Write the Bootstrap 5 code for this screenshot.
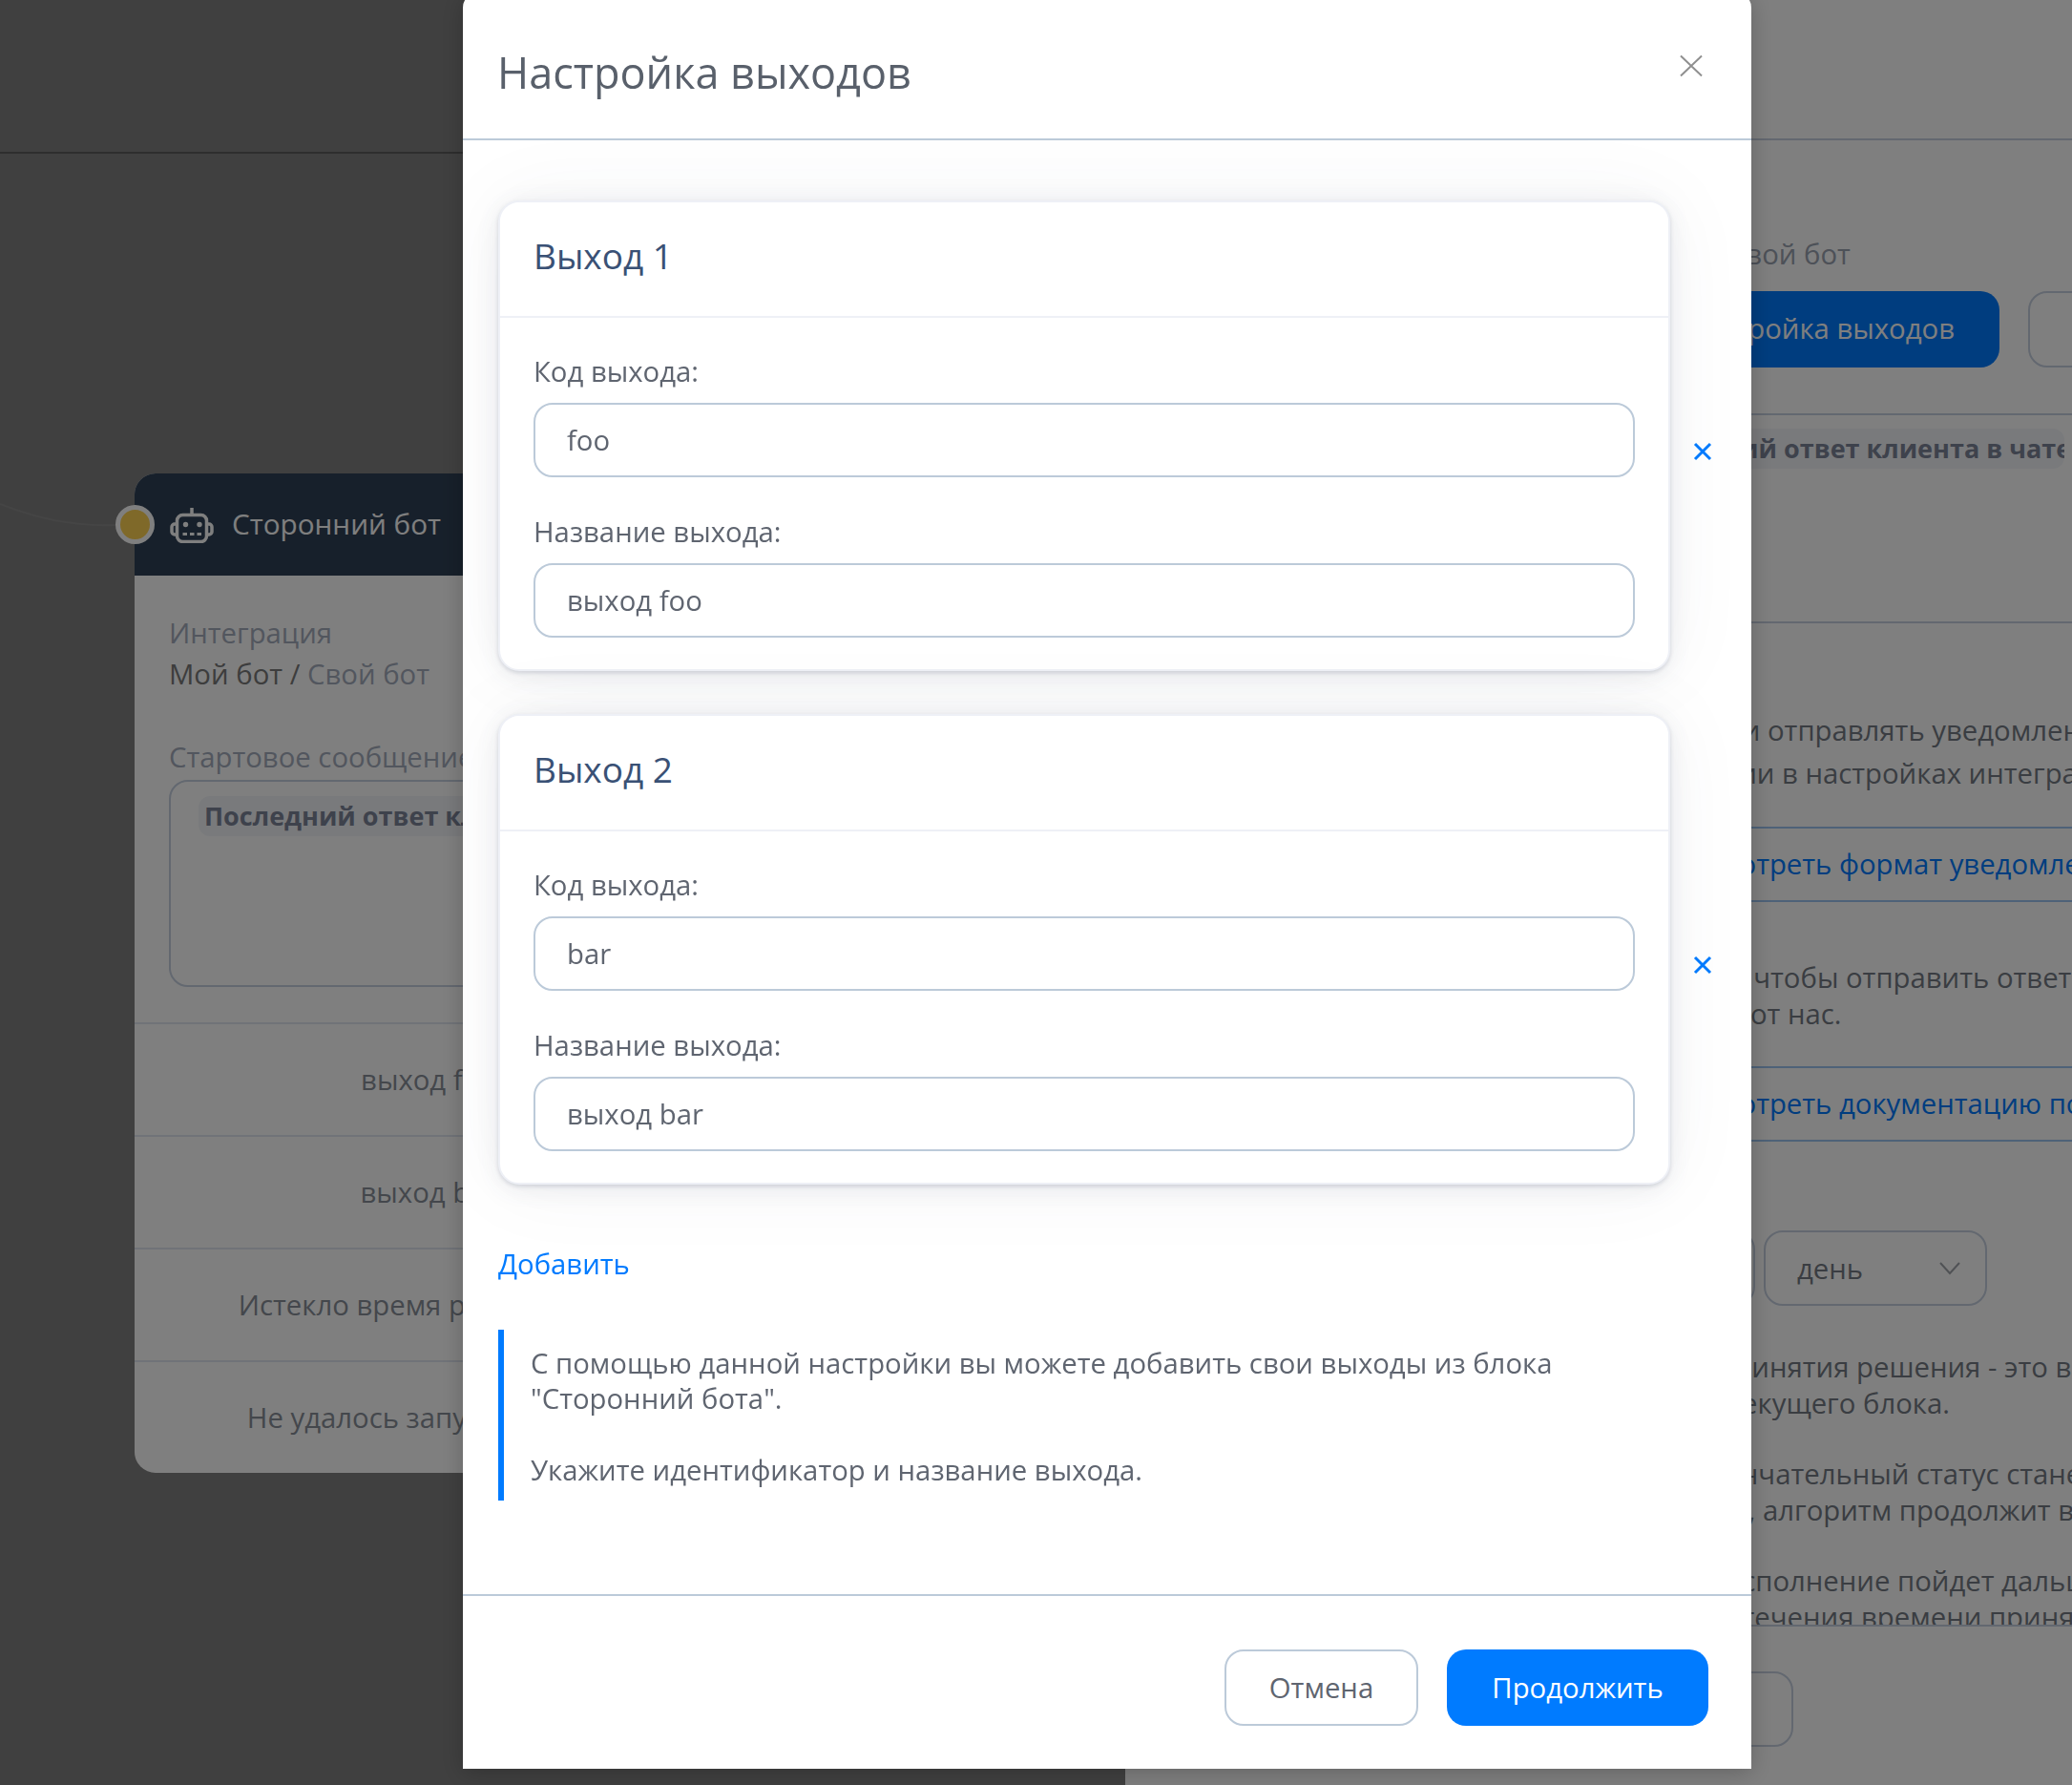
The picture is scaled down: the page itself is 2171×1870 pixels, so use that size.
<!DOCTYPE html>
<html lang="ru">
<head>
<meta charset="utf-8">
<title>Настройка выходов</title>
<link href="https://cdn.jsdelivr.net/npm/bootstrap@5.3.0/dist/css/bootstrap.min.css" rel="stylesheet">
<style>
html,body{height:100%;overflow:hidden}
body{font-family:"Open Sans","Noto Sans",sans-serif;font-size:29.3px;background:#fff;color:#747b84}
.stage{height:1870px;width:2171px}
.canvas-side{flex:0 0 1179px;background:#808080;position:relative;overflow:hidden}
.canvas-top{height:161px;border-bottom:2px solid #5c5c5c}
.wire{position:absolute;left:0;top:500px}
.flow-node{position:absolute;left:141px;top:496px;width:616px;height:1047px;background:#fff;border-radius:22px}
.node-head{height:107px;background:#2f4156;border-radius:22px 22px 0 0;color:#fff;padding-left:37px;gap:19px;font-size:29.700px}
.node-dot{position:absolute;left:-20px;top:33px;width:41px;height:41px;border-radius:50%;background:#ffd253;border:5px solid #fff}
.node-body{padding:39px 36px 0}
.node-line{line-height:43px;color:#a5adbd;white-space:nowrap}
.node-line b{font-weight:400;color:#7a7a7a}
.node-cap{line-height:40px;margin-top:45px;color:#a5adbd;white-space:nowrap}
.node-box{height:217px;margin-top:4px;border:2px solid #c6d0e0;border-radius:20px;padding:14px 29px;white-space:nowrap;overflow:hidden}
.var-chip{display:inline-block;background:#f3f5f9;border-radius:12px;font-weight:700;color:#7c8498;font-size:27px;line-height:42px;padding:0 6px}
.node-rows{margin-top:37px}
.node-row{height:118px;border-top:2px solid #e0e6f0;color:#888f99;text-align:center;line-height:116px;white-space:nowrap}
.panel-side{flex:1 1 auto;background:#fff;overflow:hidden;position:relative}
.panel-top{height:147px;border-bottom:2px solid #c6d0e0}
.panel-in{margin-left:321px;width:1000px;white-space:nowrap}
.pre{display:inline-block;text-align:right;white-space:pre}
.at-1847{width:347px}.at-1852{width:352px}.at-1867{width:367px}.at-1869{width:369px}.at-1873{width:373px}.at-1890{width:390px}.at-1927{width:427px}.at-1934{width:434px}.at-1945{width:445px}.at-1950{width:450px}.at-1952{width:452px}.at-1988{width:488px}.at-2008{width:508px}
.pl-bot{line-height:40px;margin-top:99px;color:#9aa2b0}
.panel-btns{margin-top:19px;gap:30px}
.panel-btn-main.btn,.panel-btn-alt.btn{height:80px;border-radius:20px;font-size:29.3px}
.panel-btn-main.btn{width:595px;background:#007bff;border:0;color:#fff;text-align:right;padding:0 47px 0 0}
.panel-btn-alt.btn{width:200px;border:2px solid #c6d0e0}
.panel-rule{border-top:2px solid #c6d0e0;margin-top:48px;margin-bottom:14px}
.panel-chip{height:42px;width:663px;background:#f3f5f9;border-radius:12px;font-weight:700;color:#7c8498;font-size:27px;line-height:42px;overflow:hidden}
.panel-rule2{border-top:2px solid #c6d0e0;margin-top:160px;margin-bottom:90px}
.para-wide{line-height:45px}
.para-tight{line-height:38px}
.doc-link{height:79px;border-top:2px solid #9cc4f0;border-bottom:2px solid #9cc4f0;line-height:75px;color:#007bff}
.mt-33{margin-top:33px}.mt-36{margin-top:36px}.mt-60{margin-top:60px}.mt-93{margin-top:93px}
.sel-row{gap:9px;height:79px}
.sel-a{width:339px;border:2px solid #c6d0e0;border-radius:20px}
.sel-b{width:234px;border:2px solid #c6d0e0;border-radius:20px;padding:0 26px 0 33px;color:#747b84}
.sel-val{padding-top:3px}
.scroll-note{height:291px;margin-top:45px;overflow:hidden;border-bottom:2px solid #c6d0e0;line-height:38px}
.scroll-note p{margin:0 0 36px}
.tail-btn{width:379px;height:79px;margin-top:47px;border:2px solid #c6d0e0;border-radius:20px}

.exit-dialog.modal-dialog{margin:-8px 0 0 485px;width:1350px;max-width:1350px;transform:none}
.modal.exit-modal{overflow:hidden;display:block}
.exit-dialog .modal-content{height:1861px;border:0;border-radius:16px 16px 0 0;box-shadow:0 4px 24px rgba(0,0,0,.22);color:#5f6570;display:flex;flex-direction:column}
.exit-dialog .modal-header{height:155px;flex:0 0 155px;padding:14px 51px 0 36px;border-bottom:2px solid #bccad9;border-radius:16px 16px 0 0;align-items:center}
.exit-dialog .modal-title{font-size:45px;font-weight:400;color:#59606b;line-height:60px}
.x-close{background:none;border:0;padding:0;line-height:0;margin-top:-13px}
.exit-dialog .modal-body{padding:63px 0 0 37px;flex:1 1 auto;overflow:hidden}
.out-row{width:1290px;gap:24px;margin-bottom:45px}
.out-card.card{width:1228px;flex:0 0 1228px;height:493px;border:2px solid #eef0f6;border-radius:22px;box-shadow:0 2px 4px rgba(60,70,100,.18),0 4px 30px rgba(60,70,100,.10),0 0 90px rgba(60,70,100,.05)}
.out-card .card-header{height:121px;flex:0 0 121px;background:#fff;border-bottom:2px solid #eef0f6;padding:0 35px 7px;border-radius:22px 22px 0 0;display:flex;align-items:center;font-size:37px;font-weight:500;color:#3a5175}
.out-card .card-body{padding:37px 35px 0}
.out-label{display:block;line-height:38px;margin-bottom:14px;color:#5f6570}
.out-card .form-control{height:78px;border:2px solid #bccad9;border-radius:20px;padding:0 33px;font-size:29.3px;color:#5f6570;margin-bottom:37.500px;box-shadow:none}
.out-card .form-control:last-child{margin-bottom:0}
.x-remove{background:none;border:0;padding:0;line-height:0;margin-top:32px}
.add-link{display:block;line-height:38px;color:#007bff;text-decoration:none;width:max-content;margin-top:64px}
.hint-note{margin-top:50px;width:1228px;height:179px;border-left:6px solid #007bff;padding:17px 0 0 28px;line-height:37.300px;color:#5f6570}
.exit-dialog .modal-footer{height:183px;border-top:2px solid #bccad9;border-radius:0;padding:0 45px 0 0;align-items:flex-start;justify-content:flex-end;gap:30px;flex:0 0 183px}
.exit-dialog .modal-footer>*{margin:56px 0 0}
.foot-btn.btn{height:80px;border-radius:20px;font-size:29.3px;padding:2px 0 0;line-height:1}
.foot-cancel.btn{width:203px;border:2px solid #bccad9;color:#5f6570;background:#fff}
.foot-go.btn{width:274px;border:0;background:#007bff;color:#fff}
</style>
</head>
<body>
<div class="stage d-flex">
  <div class="canvas-side">
    <div class="canvas-top"></div>
    <svg class="wire" width="130" height="70" viewBox="0 0 130 70" fill="none"><path d="M0 28C40 44 80 52 122 50" stroke="#8a8a8a" stroke-width="2"/></svg>
    <div class="flow-node">
      <div class="node-head d-flex align-items-center">
        <svg width="46" height="38" viewBox="0 0 46 38" fill="none" stroke="#fff" stroke-width="3.500" aria-hidden="true">
          <rect x="7.500" y="8.500" width="31" height="28" rx="6"/>
          <path d="M23 1v7M7 18H5a3 3 0 0 0-3 3v5a3 3 0 0 0 3 3h2M39 18h2a3 3 0 0 1 3 3v5a3 3 0 0 1-3 3h-2"/>
          <circle cx="16.500" cy="18.500" r="2.700" fill="#fff" stroke="none"/><circle cx="31" cy="18.500" r="2.700" fill="#fff" stroke="none"/>
          <path d="M13.500 28.500h4.500M21 28.500h4.500M28.500 28.500h4.500" stroke-width="3"/>
        </svg>
        <span>Сторонний бот</span>
      </div>
      <span class="node-dot"></span>
      <div class="node-body">
        <div class="node-line">Интеграция</div>
        <div class="node-line"><b>Мой бот /</b> Свой бот</div>
        <div class="node-cap">Стартовое сообщение</div>
        <div class="node-box"><span class="var-chip">Последний ответ клиента в чате</span></div>
      </div>
      <div class="node-rows">
        <div class="node-row">выход foo</div>
        <div class="node-row">выход bar</div>
        <div class="node-row">Истекло время работы бота</div>
        <div class="node-row">Не удалось запустить бота</div>
      </div>
    </div>
  </div>
  <div class="panel-side">
    <div class="panel-top"></div>
    <div class="panel-in">
      <div class="pl-bot"><span class="pre at-1890">Мой бот / Свой </span>бот</div>
      <div class="panel-btns d-flex">
        <button class="btn panel-btn-main" type="button">Настройка выходов</button>
        <button class="btn panel-btn-alt" type="button"></button>
      </div>
      <div class="panel-rule"></div>
      <div class="panel-chip"><span class="pre at-1869">Последний </span>ответ клиента в чате</div>
      <div class="panel-rule2"></div>
      <div class="para-wide"><span class="pre at-1852">получать и </span>отправлять уведомления клиентам</div>
      <div class="para-wide"><span class="pre at-1867">при интеграции </span>в настройках интеграции</div>
      <div class="doc-link mt-33"><span class="pre at-1927">Посмотреть </span>формат уведомления</div>
      <div class="para-tight mt-60"><span class="pre at-1934">Используйте API, чтобы </span>отправить ответ</div>
      <div class="para-tight"><span class="pre at-1873">получив уведомление от </span>нас.</div>
      <div class="doc-link mt-36"><span class="pre at-1927">Посмотреть </span>документацию по API</div>
      <div class="sel-row mt-93 d-flex">
        <div class="sel-a"></div>
        <div class="sel-b d-flex justify-content-between align-items-center"><span class="sel-val">день</span><svg width="22" height="14" viewBox="0 0 22 14" fill="none" stroke="#a0a4aa" stroke-width="2"><path d="M1 1l10 11L21 1"/></svg></div>
      </div>
      <div class="scroll-note">
        <p><span class="pre at-1945">Время принятия </span>решения - это время ожидания<br><span class="pre at-1952">текущего </span>блока.</p>
        <p><span class="pre at-2008">Окончательный </span>статус станет<br><span class="pre at-1847">решения, </span>алгоритм продолжит выполнение</p>
        <p><span class="pre at-1988">Исполнение </span>пойдет дальше<br><span class="pre at-1950">истечения </span>времени принятия решения</p>
      </div>
      <div class="tail-btn"></div>
    </div>
  </div>
</div>
<div class="modal-backdrop show"></div>
<div class="modal exit-modal show" role="dialog">
  <div class="modal-dialog exit-dialog">
    <div class="modal-content">
      <div class="modal-header">
        <h5 class="modal-title">Настройка выходов</h5>
        <button class="x-close ms-auto" type="button" aria-label="Закрыть"><svg width="24" height="24" viewBox="0 0 24 24" fill="none" stroke="#8f8f8f" stroke-width="2"><path d="M1 1.500l22 21M23 1.500l-22 21"/></svg></button>
      </div>
      <div class="modal-body">
        <div class="out-row d-flex align-items-center">
          <div class="card out-card">
            <div class="card-header">Выход 1</div>
            <div class="card-body">
              <label class="out-label">Код выхода:</label>
              <input class="form-control" value="foo">
              <label class="out-label">Название выхода:</label>
              <input class="form-control" value="выход foo">
            </div>
          </div>
          <button class="x-remove" type="button" aria-label="Удалить"><svg width="20" height="20" viewBox="0 0 20 20" fill="none" stroke="#007bff" stroke-width="3"><path d="M2 2l16 16M18 2L2 18"/></svg></button>
        </div>
        <div class="out-row d-flex align-items-center">
          <div class="card out-card">
            <div class="card-header">Выход 2</div>
            <div class="card-body">
              <label class="out-label">Код выхода:</label>
              <input class="form-control" value="bar">
              <label class="out-label">Название выхода:</label>
              <input class="form-control" value="выход bar">
            </div>
          </div>
          <button class="x-remove" type="button" aria-label="Удалить"><svg width="20" height="20" viewBox="0 0 20 20" fill="none" stroke="#007bff" stroke-width="3"><path d="M2 2l16 16M18 2L2 18"/></svg></button>
        </div>
        <a class="add-link" href="#">Добавить</a>
        <div class="hint-note">С помощью данной настройки вы можете добавить свои выходы из блока<br>"Сторонний бота".<br><br>Укажите идентификатор и название выхода.</div>
      </div>
      <div class="modal-footer">
        <button class="btn foot-btn foot-cancel" type="button">Отмена</button>
        <button class="btn foot-btn foot-go" type="button">Продолжить</button>
      </div>
    </div>
  </div>
</div>
</body>
</html>
